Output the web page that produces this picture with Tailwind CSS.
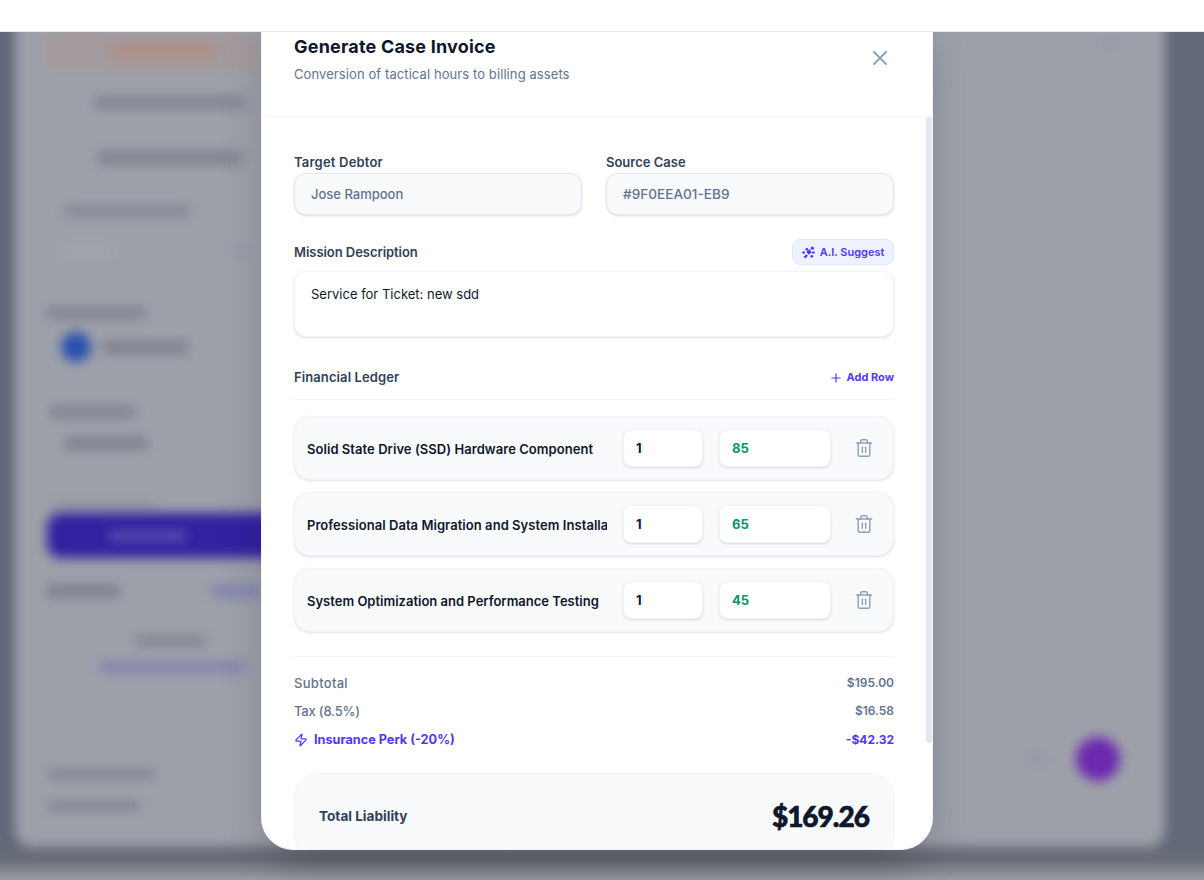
<!DOCTYPE html>
<html lang="en">
<head>
  <meta charset="UTF-8">
  <title>Generate Case Invoice</title>
  <script src="https://cdn.jsdelivr.net/npm/@tailwindcss/browser@4"></script>
</head>
<body class="h-[880px] overflow-hidden bg-[#62687a] font-['Inter',sans-serif]">
  <!-- top bar -->
  <div class="absolute top-0 left-0 right-0 z-20 h-8 bg-white border-b border-slate-200"></div>

  <!-- blurred page behind the modal -->
  <div class="h-[880px] overflow-hidden bg-[linear-gradient(#626876_0,#626876_845px,#6a6e78_860px,#9a9da6_880px)]">
    <div class="blur-[6px] ml-[15px] w-[1150px] h-[847px] pt-8 rounded-b-2xl bg-[#9da0a9] flex justify-between pl-8 pr-[45px]">
      <div class="w-[214px] flex flex-col shrink-0">
        <div class="-ml-[2px] h-[38px] bg-[#a39a9d] flex items-center justify-center pl-[20px]">
          <div class="w-[107px] h-[16px] rounded bg-[#ad8f88]"></div>
        </div>
        <div class="mt-[27px] ml-12 w-[150px] h-[11px] bg-[#7c808c]"></div>
        <div class="mt-[44px] ml-[51px] w-[144px] h-[12px] bg-[#7c808c]"></div>
        <div class="mt-[41px] ml-[18px] w-[125px] h-[12px] bg-[#868a95]"></div>
        <div class="mt-[27px] flex items-center justify-between pl-[18px] pr-[14px]">
          <div class="w-[45px] h-[12px] bg-[#a3a6af]"></div>
          <div class="w-[14px] h-[14px] rounded-full bg-[#989ba6]"></div>
        </div>
        <div class="mt-[49px] w-[98px] h-[12px] bg-[#808490]"></div>
        <div class="mt-[13px] ml-[14px] flex items-center gap-3">
          <div class="w-[30px] h-[30px] rounded-full bg-[#2850b0]"></div>
          <div class="w-[85px] h-[11px] bg-[#787c88]"></div>
        </div>
        <div class="mt-[44px] ml-[3px] w-[85px] h-[12px] bg-[#808490]"></div>
        <div class="mt-[20px] ml-[18px] w-[82px] h-[11px] bg-[#787c88]"></div>
        <div class="mt-[53px] ml-[3px] w-[105px] h-[6px] bg-[#8d909b]"></div>
        <div class="mt-[5px] w-[240px] h-[45px] rounded-[14px] bg-[#3022a0] flex items-center justify-center pr-[40px]">
          <div class="w-[77px] h-[10px] bg-[#5c50b0]"></div>
        </div>
        <div class="mt-[27px] flex justify-between">
          <div class="w-[73px] h-[12px] bg-[#7c7f8c]"></div>
          <div class="w-[50px] h-[12px] bg-[#8082b0]"></div>
        </div>
        <div class="mt-[38px] ml-[88px] w-[70px] h-[11px] bg-[#828690]"></div>
        <div class="mt-[16px] ml-[53px] w-[145px] h-[10px] bg-[#8080b0]"></div>
        <div class="mt-[97px] w-[108px] h-[10px] bg-[#828690]"></div>
        <div class="mt-[22px] w-[93px] h-[10px] bg-[#828690]"></div>
      </div>
      <div class="flex flex-col justify-between items-end">
        <div class="mt-[2px] w-[18px] h-[18px] rounded-full bg-[#959aa5]"></div>
        <div class="mb-[66px] flex items-center gap-[28px]">
          <div class="w-[20px] h-[20px] rounded-full bg-[#959aa5]"></div>
          <div class="w-[44px] h-[44px] rounded-full bg-[#6c28b0]"></div>
        </div>
      </div>
    </div>
  </div>

  <!-- modal -->
  <div class="absolute top-0 left-[261px] z-10 w-[672px] h-[850px] bg-white border border-slate-100 rounded-b-[32px] shadow-2xl overflow-hidden flex flex-col">
    <div class="h-[116px] shrink-0 border-b border-slate-100 pt-8 pl-8 pr-[38px] flex justify-between">
      <div>
        <h2 class="text-lg leading-7 font-bold tracking-[0.2px] text-slate-900">Generate Case Invoice</h2>
        <p class="mt-[3px] text-[13px] leading-5 tracking-[0.09px] text-slate-500">Conversion of tactical hours to billing assets</p>
      </div>
      <button class="h-[30px] mt-[10px] mr-[2px] text-slate-400">
        <svg class="w-[24px] h-[24px]" viewBox="0 0 24 24" fill="none" stroke="currentColor" stroke-width="2" stroke-linecap="round" stroke-linejoin="round"><path d="M18 6 6 18"/><path d="m6 6 12 12"/></svg>
      </button>
    </div>

    <div class="relative flex-1 overflow-hidden pl-8 pr-[38px] pt-[35px]">
      <!-- scrollbar thumb -->
      <div class="absolute top-0 right-0 w-[6px] h-[626px] rounded-full bg-slate-200"></div>

      <div class="grid grid-cols-2 gap-6">
        <div>
          <label class="block text-[13px] leading-5 mb-px font-semibold tracking-[0.2px] text-slate-700">Target Debtor</label>
          <input readonly value="Jose Rampoon" class="w-full h-[42px] px-4 text-[13px] font-medium text-slate-500 bg-slate-50 border border-slate-200 rounded-xl shadow-sm outline-none">
        </div>
        <div>
          <label class="block text-[13px] leading-5 mb-px font-semibold text-slate-700">Source Case</label>
          <input readonly value="#9F0EEA01-EB9" class="w-full h-[42px] px-4 text-[13.6px] font-medium text-slate-500 bg-slate-50 border border-slate-200 rounded-xl shadow-sm outline-none">
        </div>
      </div>

      <div class="mt-6 flex items-center justify-between h-[26px] mb-[6px]">
        <label class="pt-px text-[13px] font-semibold tracking-[-0.05px] text-slate-700">Mission Description</label>
        <button class="h-[26px] w-[102px] flex items-center justify-center gap-[5px] rounded-lg bg-indigo-50 border border-indigo-100 text-[11px] font-semibold text-indigo-600">
          <svg class="w-[13px] h-[13px]" viewBox="0 0 24 24" fill="currentColor"><circle cx="19" cy="4" r="3"/><circle cx="9" cy="6" r="2.5"/><path d="m14 6 4 6-6 4-4-6z"/><circle cx="21" cy="12" r="2.5"/><circle cx="18" cy="19" r="2.5"/><path d="m8 15 3 3-5 5-3-3z"/><circle cx="3" cy="12" r="2.5"/></svg>
          A.I. Suggest
        </button>
      </div>
      <textarea readonly class="block w-full h-[66px] px-4 py-3 text-[13px] leading-5 text-slate-900 bg-white border border-slate-100 rounded-xl shadow-sm outline-none resize-none">Service for Ticket: new sdd</textarea>

      <div class="mt-6 pb-[5px] h-[39px] flex items-center justify-between border-b border-slate-100">
        <span class="text-[13px] font-semibold tracking-[0.1px] text-slate-700">Financial Ledger</span>
        <button class="flex items-center gap-1 text-[11px] font-bold text-indigo-600">
          <svg class="w-[14px] h-[14px]" viewBox="0 0 24 24" fill="none" stroke="currentColor" stroke-width="2" stroke-linecap="round" stroke-linejoin="round"><path d="M5 12h14"/><path d="M12 5v14"/></svg>
          Add Row
        </button>
      </div>

      <div class="mt-4 flex flex-col gap-3">
        <div class="h-[64px] px-3 flex items-center gap-4 bg-slate-50 border border-slate-100 rounded-2xl shadow-sm">
          <input readonly value="Solid State Drive (SSD) Hardware Component" class="flex-1 min-w-0 pt-[3px] bg-transparent text-[13px] tracking-[0.05px] font-semibold text-slate-900 outline-none">
          <input readonly value="1" class="w-20 h-[38px] px-3 bg-white border border-slate-100 rounded-lg shadow-sm text-[13px] font-bold text-slate-900 outline-none">
          <input readonly value="85" class="w-28 h-[38px] px-3 bg-white border border-slate-100 rounded-lg shadow-sm text-[13px] font-bold text-emerald-600 outline-none">
          <button class="p-[7px] text-slate-400">
            <svg class="w-5 h-5" viewBox="0 0 24 24" fill="none" stroke="currentColor" stroke-width="1.75" stroke-linecap="round" stroke-linejoin="round"><path d="M3 6h18"/><path d="M19 6v14a2 2 0 0 1-2 2H7a2 2 0 0 1-2-2V6"/><path d="M8 6V4a2 2 0 0 1 2-2h4a2 2 0 0 1 2 2v2"/><path d="M10 11v6"/><path d="M14 11v6"/></svg>
          </button>
        </div>
        <div class="h-[64px] px-3 flex items-center gap-4 bg-slate-50 border border-slate-100 rounded-2xl shadow-sm">
          <input readonly value="Professional Data Migration and System Installation" class="flex-1 min-w-0 pt-[3px] bg-transparent text-[13px] tracking-[0.05px] font-semibold text-slate-900 outline-none">
          <input readonly value="1" class="w-20 h-[38px] px-3 bg-white border border-slate-100 rounded-lg shadow-sm text-[13px] font-bold text-slate-900 outline-none">
          <input readonly value="65" class="w-28 h-[38px] px-3 bg-white border border-slate-100 rounded-lg shadow-sm text-[13px] font-bold text-emerald-600 outline-none">
          <button class="p-[7px] text-slate-400">
            <svg class="w-5 h-5" viewBox="0 0 24 24" fill="none" stroke="currentColor" stroke-width="1.75" stroke-linecap="round" stroke-linejoin="round"><path d="M3 6h18"/><path d="M19 6v14a2 2 0 0 1-2 2H7a2 2 0 0 1-2-2V6"/><path d="M8 6V4a2 2 0 0 1 2-2h4a2 2 0 0 1 2 2v2"/><path d="M10 11v6"/><path d="M14 11v6"/></svg>
          </button>
        </div>
        <div class="h-[64px] px-3 flex items-center gap-4 bg-slate-50 border border-slate-100 rounded-2xl shadow-sm">
          <input readonly value="System Optimization and Performance Testing" class="flex-1 min-w-0 pt-[3px] bg-transparent text-[13px] font-semibold text-slate-900 outline-none">
          <input readonly value="1" class="w-20 h-[38px] px-3 bg-white border border-slate-100 rounded-lg shadow-sm text-[13px] font-bold text-slate-900 outline-none">
          <input readonly value="45" class="w-28 h-[38px] px-3 bg-white border border-slate-100 rounded-lg shadow-sm text-[13px] font-bold text-emerald-600 outline-none">
          <button class="p-[7px] text-slate-400">
            <svg class="w-5 h-5" viewBox="0 0 24 24" fill="none" stroke="currentColor" stroke-width="1.75" stroke-linecap="round" stroke-linejoin="round"><path d="M3 6h18"/><path d="M19 6v14a2 2 0 0 1-2 2H7a2 2 0 0 1-2-2V6"/><path d="M8 6V4a2 2 0 0 1 2-2h4a2 2 0 0 1 2 2v2"/><path d="M10 11v6"/><path d="M14 11v6"/></svg>
          </button>
        </div>
      </div>

      <div class="mt-6 pt-4 border-t border-slate-100 flex flex-col gap-2 font-medium text-slate-500">
        <div class="flex justify-between leading-5"><span class="text-[13px] tracking-[0.3px]">Subtotal</span><span class="text-[12px] font-semibold">$195.00</span></div>
        <div class="flex justify-between leading-5"><span class="text-[13px] tracking-[-0.2px]">Tax (8.5%)</span><span class="text-[12px] font-semibold">$16.58</span></div>
        <div class="flex justify-between leading-5 font-bold text-indigo-600 translate-y-px">
          <span class="flex items-center gap-[6px] text-[12.7px]">
            <svg class="w-[14px] h-[14px]" viewBox="0 0 24 24" fill="none" stroke="currentColor" stroke-width="2" stroke-linecap="round" stroke-linejoin="round"><path d="M4 14a1 1 0 0 1-.78-1.63l9.9-10.2a.5.5 0 0 1 .86.46l-1.92 6.02A1 1 0 0 0 13 10h7a1 1 0 0 1 .78 1.63l-9.9 10.2a.5.5 0 0 1-.86-.46l1.92-6.02A1 1 0 0 0 11 14z"/></svg>
            Insurance Perk (-20%)
          </span>
          <span class="text-[12px]">-$42.32</span>
        </div>
      </div>

      <div class="mt-6 h-[86px] px-6 flex items-center justify-between bg-slate-50 border border-slate-100 rounded-3xl">
        <span class="text-[13.6px] font-bold text-slate-700">Total Liability</span>
        <span class="font-['Lato',sans-serif] text-[28px] tracking-[-1px] font-black [-webkit-text-stroke:0.7px_#0f172b] text-slate-900">$169.26</span>
      </div>
    </div>
  </div>
</body>
</html>
